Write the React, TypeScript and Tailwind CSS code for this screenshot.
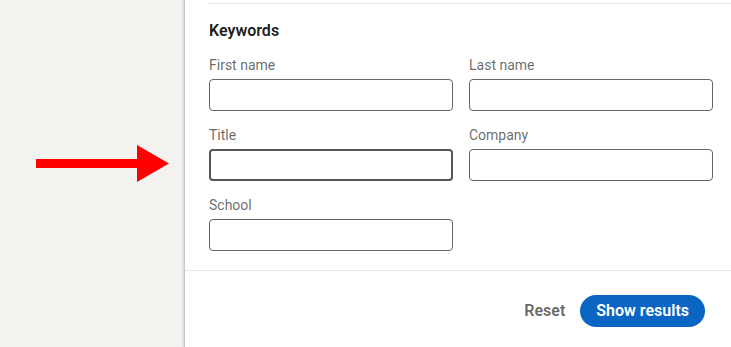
import React from 'react';

const fields = ['First name', 'Last name', 'Title', 'Company', 'School'];

const App: React.FC = () => {
    return (
        <div className="flex h-[347px] w-[731px] overflow-hidden bg-white font-['Roboto',sans-serif]">
            {/* LEFT BACKDROP */}
            <div className="w-[184px] shrink-0 bg-[#f3f2ef] pl-[36px] pt-[145px]">
                <svg width="133" height="37" viewBox="0 0 133 37">
                    <rect x="0" y="14" width="102" height="9" fill="#ff0000" />
                    <polygon points="101,0 133,18.5 101,37" fill="#ff0000" />
                </svg>
            </div>

            {/* PANEL */}
            <div className="flex flex-1 flex-col border-l border-[#c8c8c6] shadow-[-1px_0_2px_rgba(0,0,0,0.15)]">
                <div className="ml-[24px] mt-[3px] h-px bg-[#e8e8e8]" />

                <div className="pl-[24px] pt-[15px] pb-[19px]">
                    <h2 className="text-[16px] font-semibold leading-[24px] text-black/90">Keywords</h2>
                    <div className="mt-[12px] grid w-[504px] grid-cols-2 gap-x-4 gap-y-[14px]">
                        {fields.map((f) => (
                            <div key={f} className="flex flex-col gap-1">
                                <label className="text-[14px] leading-[20px] text-black/60">{f}</label>
                                {f === 'Title' ? (
                                    <div className="h-[32px] rounded-[4px] border-2 border-[#555]" />
                                ) : (
                                    <div className="h-[32px] rounded-[4px] border border-[#666]" />
                                )}
                            </div>
                        ))}
                    </div>
                </div>

                <div className="h-px bg-[#e8e8e8]" />

                {/* FOOTER */}
                <div className="flex items-center justify-end gap-[15px] pr-[26px] pt-[24px]">
                    <button className="text-[16px] font-semibold leading-[20px] text-black/60">Reset</button>
                    <button className="h-[32px] rounded-full bg-[#0a66c2] px-4 text-[16px] font-semibold text-white">
                        Show results
                    </button>
                </div>
            </div>
        </div>
    );
};

export default App;
